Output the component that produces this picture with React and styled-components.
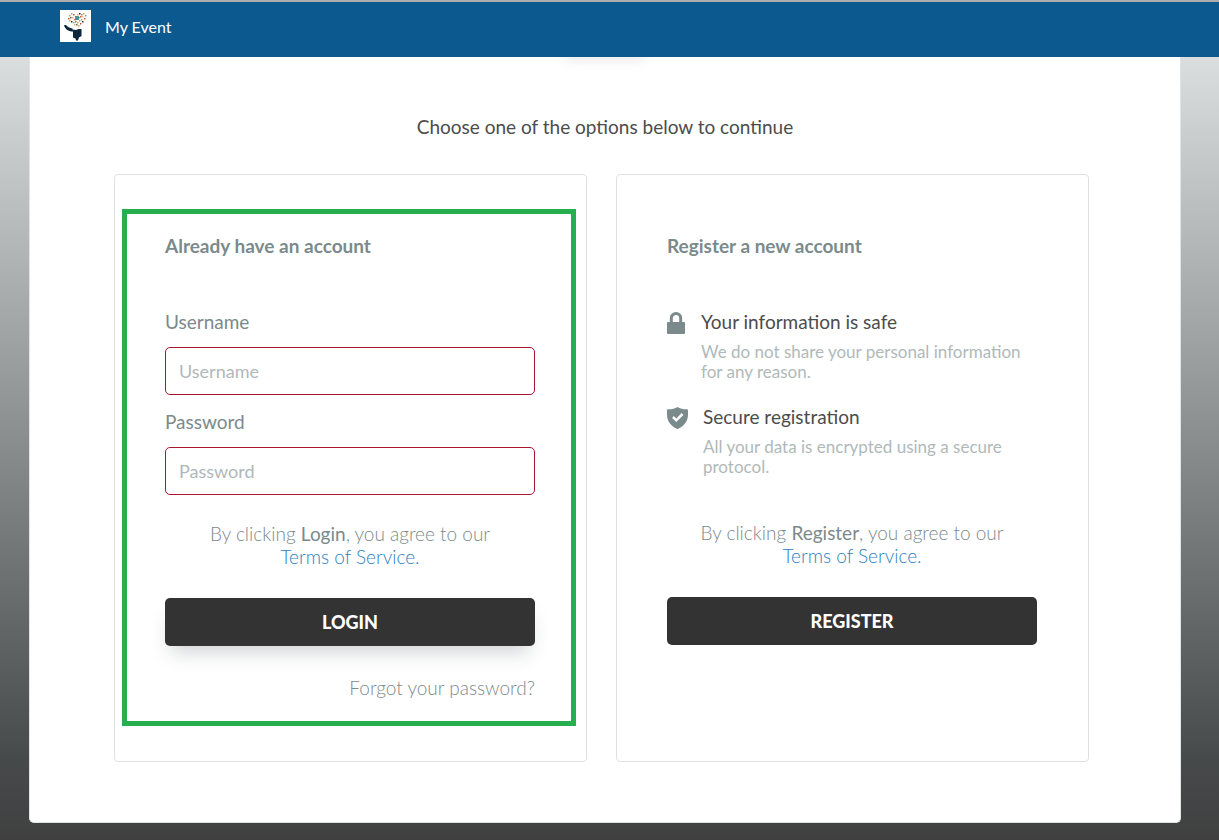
//Imports
	import { useState } from 'react';
	import styled, { createGlobalStyle } from 'styled-components';

//Styled
	const GlobalStyle = createGlobalStyle`
		* {
			box-sizing: border-box;
		}

		body {
			margin: 0;
			font-family: Lato, "Open Sans", sans-serif;
			font-size: 19px;
			line-height: 23px;
			color: #4c4c4c;
		}
	`;

	const Page = styled.div`
		min-height: 100vh;
		display: flex;
		flex-direction: column;
		background: linear-gradient(#dadedf 57px, #474a4b 760px, #404040);
	`;

	const Header = styled.header`
		position: relative;
		z-index: 1;
		display: flex;
		align-items: center;
		gap: 14px;
		height: 57px;
		padding: 0 60px 7px;
		border-top: 2px solid #adadad;
		background: #0c5990;
		color: #fff;
		font-size: 16px;
	`;

	const Main = styled.main`
		flex: 1;
		margin: 0 38px 17px 29px;
		border: 1px solid #e1e4e4;
		border-top: 0;
		border-radius: 0 0 5px 5px;
		background: #fff;
	`;

	//Sits behind the header, only its shadow shows
	const Emblem = styled.div`
		width: 80px;
		height: 40px;
		margin: -44px auto 0;
		background: #fff;
		box-shadow: 0 6px 14px rgba(0, 0, 0, 0.1);
	`;

	const Intro = styled.p`
		margin: 62px 0 36px;
		text-align: center;
	`;

	const Columns = styled.div`
		display: grid;
		grid-template-columns: 1fr 1fr;
		gap: 29px;
		padding: 0 91px 60px 84px;
	`;

	const Card = styled.section`
		position: relative;
		min-height: 588px;
		padding: 59px 51px 59px 50px;
		border: 1px solid #dee1e2;
		border-radius: 4px;
	`;

	const Highlight = styled.div`
		position: absolute;
		inset: 34px 10px 35px 7px;
		border: 5px solid #27ae4f;
		pointer-events: none;
	`;

	const Heading = styled.h2`
		margin: 0 0 53px;
		color: #7b8a8b;
		font-size: 19px;
		font-weight: 700;
	`;

	const Field = styled.div`
		display: flex;
		flex-direction: column;
		gap: 14px;
		margin-bottom: 15px;
	`;

	const Label = styled.label`
		color: #7b8a8b;
	`;

	const Input = styled.input`
		height: 48px;
		padding: 0 13px;
		border: 1px solid #a8152f;
		border-radius: 5px;
		background: #fff;
		color: #4c4c4c;
		font: inherit;
		font-size: 18px;

		&::placeholder {
			color: #b0b8b9;
			opacity: 1;
		}
	`;

	const Terms = styled.p`
		margin: ${(props) => props.$top} 0 30px;
		color: #7b8a8b;
		font-weight: 300;
		text-align: center;

		strong {
			font-weight: 400;
		}
	`;

	const TermsLink = styled.a`
		display: inline-block;
		color: #2f80c0;
		text-decoration: none;
	`;

	const Button = styled.button`
		display: block;
		width: 100%;
		height: 48px;
		padding: 0;
		border: 0;
		border-radius: 5px;
		background: #333;
		box-shadow: ${(props) => (props.$raised ? '0 12px 20px -6px rgba(40, 50, 55, 0.22)' : 'none')};
		color: #fff;
		font: inherit;
		font-size: 18px;
		font-weight: 900;
		text-transform: uppercase;
		cursor: pointer;
	`;

	const Forgot = styled.a`
		display: block;
		margin-top: 30px;
		color: #7b8a8b;
		font-weight: 300;
		text-align: right;
		text-decoration: none;
	`;

	const Feature = styled.div`
		display: flex;
		gap: 15px;
		margin-bottom: 23px;

		> svg {
			flex: none;
			margin-top: 2px;
			color: #7b8a8b;
		}
	`;

	const FeatureTitle = styled.h3`
		margin: 0 0 9px;
		font-size: 19px;
		font-weight: 400;
	`;

	const FeatureText = styled.p`
		margin: 0;
		color: #b0b9b9;
		font-size: 17px;
		line-height: 20px;
	`;

//Drawings
	const confetti = [
		[9, 5, '#d9a441'], [11, 3, '#9aa7a0'], [13, 4, '#c8553d'], [15, 6, '#3f8f8a'],
		[8, 8, '#c8553d'], [10, 7, '#5a6b6a'], [12, 7, '#e3b778'], [14, 9, '#d96c4a'],
		[16, 8, '#2f7f86'], [18, 7, '#2f7f86'], [17, 4, '#e3b778'], [19, 3, '#20343f'],
		[21, 4, '#d96c4a'], [23, 3, '#d9a441'], [25, 5, '#5aa39b'], [22, 6, '#e3b778'],
		[20, 6, '#c8553d'], [24, 8, '#c8553d'], [21, 9, '#d9a441'], [19, 10, '#7fb0a5'],
		[9, 10, '#d9a441'], [11, 11, '#20343f'], [13, 12, '#7fb0a5'], [15, 11, '#c8553d'],
		[17, 12, '#d9a441'], [22, 11, '#20343f'], [20, 13, '#c8553d'], [16, 14, '#5a6b6a'],
		[18, 15, '#d9a441'], [14, 14, '#e3b778'],
	];

	function Logo() {
		return (
			<svg width="31" height="32" viewBox="0 0 31 32" aria-hidden="true">
				<rect width="31" height="32" fill="#fff" />
				<rect x="15" y="6" width="4" height="4" fill="#5b9a98" />
				{confetti.map(([x, y, fill]) => (
					<rect key={`${x}-${y}`} x={x} y={y} width="1.500" height="1.500" fill={fill} />
				))}
				<path d="M4 15.500C5 14.600 6.500 15 7.500 16.500C9 17.800 11 18.200 12.500 18.500V19.500L16 20L18.500 19H21.500V26L19 27.500L18 30.500H16L15.500 28.500L13 27.500V21.500C9.500 21.500 5.500 20 4 15.500Z" fill="#0c2739" />
			</svg>
		);
	}

	function Lock() {
		return (
			<svg width="19" height="22" viewBox="0 0 19 22" aria-hidden="true">
				<path d="M4.300 11V6.200a4.700 4.700 0 0 1 9.400 0V11" fill="none" stroke="currentColor" strokeWidth="3" />
				<rect y="10" width="18" height="12" rx="1" fill="currentColor" />
			</svg>
		);
	}

	function ShieldCheck() {
		return (
			<svg width="21" height="22" viewBox="0 0 21 22" aria-hidden="true">
				<path d="M10.500 0C13 1.600 17 2.500 20 2.300Q21 2.400 21 3.500V8C21 14.500 16.500 19.500 10.500 22C4.500 19.500 0 14.500 0 8V3.500Q0 2.400 1 2.300C4 2.500 8 1.600 10.500 0Z" fill="currentColor" />
				<path d="M6 10l3.300 3.300L15.500 7" fill="none" stroke="#fff" strokeWidth="2.500" />
			</svg>
		);
	}

//Function
export default function App() {
	const [username, setUsername] = useState('');
	const [password, setPassword] = useState('');

	return (
			<Page>
				<GlobalStyle />
				<Header>
					<Logo />
					<span>My Event</span>
				</Header>
				<Main>
					<Emblem />
					<Intro>Choose one of the options below to continue</Intro>
					<Columns>
						<Card>
							<Highlight />
							<Heading>Already have an account</Heading>
							<form onSubmit={(e) => e.preventDefault()}>
								<Field>
									<Label htmlFor="username">Username</Label>
									<Input id="username" placeholder="Username" value={username} onChange={(e) => setUsername(e.target.value)} />
								</Field>
								<Field>
									<Label htmlFor="password">Password</Label>
									<Input id="password" type="password" placeholder="Password" value={password} onChange={(e) => setPassword(e.target.value)} />
								</Field>
								<Terms $top="27px">
									By clicking <strong>Login</strong>, you agree to our<br />
									<TermsLink href="#terms">Terms of Service.</TermsLink>
								</Terms>
								<Button type="submit" $raised>Login</Button>
							</form>
							<Forgot href="#forgot">Forgot your password?</Forgot>
						</Card>
						<Card>
							<Heading>Register a new account</Heading>
							<Feature>
								<Lock />
								<div>
									<FeatureTitle>Your information is safe</FeatureTitle>
									<FeatureText>We do not share your personal information for any reason.</FeatureText>
								</div>
							</Feature>
							<Feature>
								<ShieldCheck />
								<div>
									<FeatureTitle>Secure registration</FeatureTitle>
									<FeatureText>All your data is encrypted using a secure protocol.</FeatureText>
								</div>
							</Feature>
							<Terms $top="44px">
								By clicking <strong>Register</strong>, you agree to our<br />
								<TermsLink href="#terms">Terms of Service.</TermsLink>
							</Terms>
							<Button type="button">Register</Button>
						</Card>
					</Columns>
				</Main>
			</Page>
		)
	}
